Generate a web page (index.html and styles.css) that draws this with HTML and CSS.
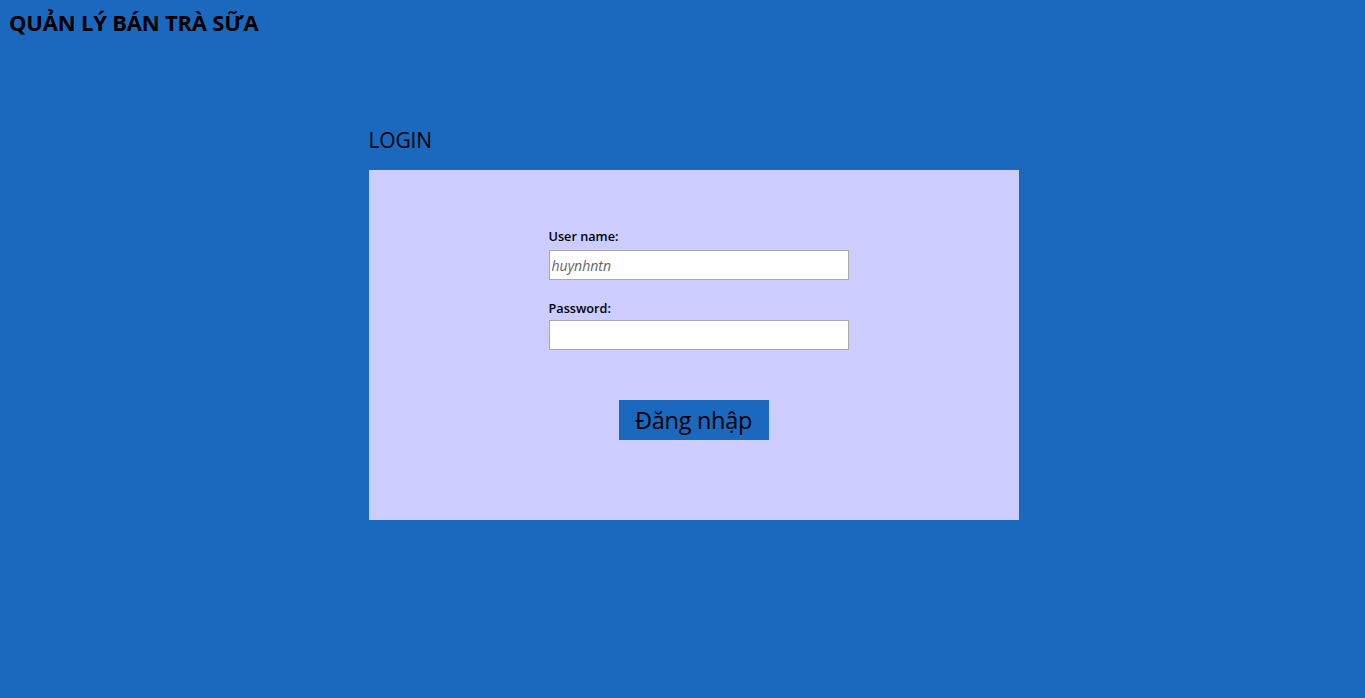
FILE: index.html
```html
<!DOCTYPE html>
<html lang="vi">
<head>
<meta charset="utf-8">
<title>Quản lý bán trà sữa</title>
<link rel="stylesheet" href="styles.css">
</head>
<body>
<header class="site-header">
  <h1 class="site-title">QUẢN LÝ BÁN TRÀ SỮA</h1>
</header>
<main class="login">
  <h2 class="login-title">LOGIN</h2>
  <form class="login-panel">
    <div class="fields">
      <label class="field-label" for="user">User name:</label>
      <input class="field-input" id="user" type="text" placeholder="huynhntn">
      <label class="field-label field-label--second" for="pass">Password:</label>
      <input class="field-input" id="pass" type="password">
    </div>
    <button class="login-btn" type="button">Đăng nhập</button>
  </form>
</main>
</body>
</html>
```
FILE: styles.css
```css
html, body {
  margin: 0;
  padding: 0;
  height: 100%;
}
body {
  background: #1a69bf;
  font-family: "Open Sans", "Noto Sans", sans-serif;
  color: #000;
}
.site-header {
  padding: 7px 0 0 9px;
}
.site-title {
  margin: 0;
  font-size: 22px;
  font-weight: 700;
  line-height: 30px;
  letter-spacing: -0.2px;
}
.login {
  width: 650px;
  margin: 0 auto;
  padding-top: 89px;
  padding-left: 22px;
}
.login-title {
  margin: 0 0 16px 0;
  font-size: 21px;
  font-weight: 400;
  line-height: 28px;
  letter-spacing: -0.2px;
}
.login-panel {
  background: #ccccff;
  height: 350px;
  box-sizing: border-box;
  padding-top: 58px;
  display: flex;
  flex-direction: column;
  align-items: center;
}
.fields {
  width: 300px;
  margin-left: 10px;
  display: flex;
  flex-direction: column;
}
.field-label {
  font-size: 12.7px;
  font-weight: 600;
  line-height: 16px;
  margin-bottom: 6px;
}
.field-label--second {
  margin-top: 20px;
  margin-bottom: 4px;
}
.field-input {
  width: 300px;
  height: 30px;
  box-sizing: border-box;
  border: 1px solid #a9a9a9;
  background: #fff;
  padding: 0 2px;
  font-family: "Open Sans", "Noto Sans", sans-serif;
  font-size: 14px;
  outline: none;
}
.field-input::placeholder {
  color: #666;
  font-style: italic;
}
.login-btn {
  margin-top: 50px;
  width: 150px;
  height: 40px;
  background: #1a69bf;
  border: none;
  color: #000;
  font-family: "Open Sans", "Noto Sans", sans-serif;
  font-size: 23.5px;
  padding: 0;
  letter-spacing: -0.3px;
}
```
